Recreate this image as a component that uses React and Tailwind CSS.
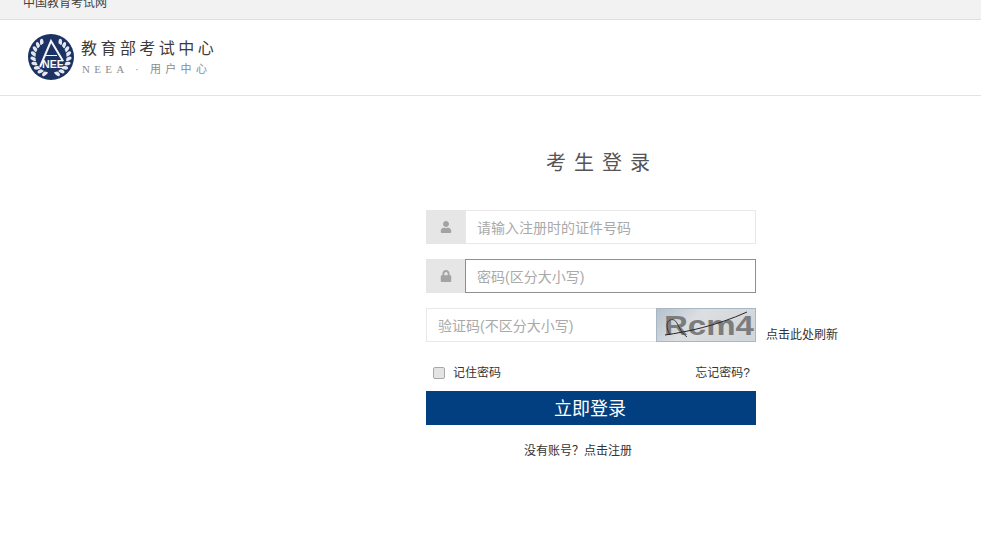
import { FaUser, FaLock } from "react-icons/fa"

const font = "font-['Liberation_Sans','Noto_Sans_CJK_SC',sans-serif]"

function Logo() {
  const leaves = [32, 48, 64, 80, 96, 112, 128, 144, 160]
  return (
    <svg width="46" height="46" viewBox="0 0 46 46" className="shrink-0">
      <circle cx="23" cy="23" r="23" fill="#1c3263" />
      {leaves.map((a) => (
        <g key={a}>
          <ellipse cx="23" cy="5.5" rx="1.8" ry="3.4" fill="#e4e8f0" transform={`rotate(${a} 23 23) rotate(-30 23 5.5)`} />
          <ellipse cx="23" cy="5.5" rx="1.8" ry="3.4" fill="#e4e8f0" transform={`rotate(${-a} 23 23) rotate(30 23 5.5)`} />
        </g>
      ))}
      <circle cx="23" cy="23" r="15.5" fill="#1c3263" />
      <path d="M12 33 L23 7 L35 27" fill="none" stroke="#f5f6fa" strokeWidth="2" />
      <path d="M18 21.5 H29" stroke="#f5f6fa" strokeWidth="1" />
      <text x="25" y="33.5" textAnchor="middle" fontSize="11" fontWeight="700" fill="#f5f6fa" fontFamily="Liberation Sans, sans-serif" textLength="22" lengthAdjust="spacingAndGlyphs">NEE</text>
    </svg>
  )
}

function Captcha() {
  return (
    <svg width="100" height="34" viewBox="0 0 100 34" className="block shrink-0">
      <defs>
        <linearGradient id="captcha-bg" x1="0" y1="0" x2="1" y2="0.3">
          <stop offset="0" stopColor="#b3c0cc" />
          <stop offset="0.45" stopColor="#dcdfe2" />
          <stop offset="1" stopColor="#d2d7db" />
        </linearGradient>
      </defs>
      <rect x="0.5" y="0.5" width="99" height="33" fill="url(#captcha-bg)" stroke="#a9b7c4" />
      <text x="8" y="27" fontSize="27" fontWeight="700" fill="#7c7c7c" textLength="90" lengthAdjust="spacingAndGlyphs" fontFamily="Liberation Sans, sans-serif">Rcm4</text>
      <path d="M9 27 C 30 24, 60 18, 91 4" fill="none" stroke="#262626" strokeWidth="1" />
      <path d="M14 27 C 10 20, 10 14, 14 12 C 19 10, 21 15, 23 19 S 27 26, 31 29" fill="none" stroke="#333" strokeWidth="1" />
    </svg>
  )
}

function IconField({ icon, placeholder, focused }) {
  return (
    <div className="flex h-[34px]">
      <div className="flex w-[39px] items-center justify-center bg-[#e6e6e6] text-[#a3a3a3]">{icon}</div>
      <input
        placeholder={placeholder}
        className={`h-full flex-1 min-w-0 border px-[11px] pt-[1px] text-sm outline-none placeholder:text-[#a9a9a9] ${focused ? "border-[#8f8f8f]" : "border-[#e8e8e8]"}`}
      />
    </div>
  )
}

export default function App() {
  return (
    <div className={`h-[559px] overflow-hidden bg-white text-[#333] ${font}`}>
      <div className="h-5 overflow-hidden border-b border-[#dedede] bg-[#f2f2f2] pl-[23px] text-xs leading-[6px] text-[#444]">
        中国教育考试网
      </div>
      <div className="flex h-[76px] items-center gap-[7px] border-b border-[#e3e3e3] pb-[1px] pl-[28px]">
        <Logo />
        <div className="flex flex-col">
          <span className="text-base leading-[20px] tracking-[3.45px] text-[#3c3c3c]">教育部考试中心</span>
          <span className="mt-[3px] pl-[1px] font-['Liberation_Serif','Noto_Sans_CJK_SC',serif] text-[11px] leading-[14px] tracking-[4.3px] text-[#8c8c8c]">
            NEEA · 用户中心
          </span>
        </div>
      </div>
      <div className="ml-[426px] w-[330px]">
        <h1 className="mt-[53px] ml-[120px] text-xl leading-7 tracking-[8px] whitespace-nowrap text-[#555]">考生登录</h1>
        <div className="mt-[33px] flex flex-col gap-[15px]">
          <IconField icon={<FaUser size={12} />} placeholder="请输入注册时的证件号码" />
          <IconField icon={<FaLock size={12} />} placeholder="密码(区分大小写)" focused />
          <div className="relative flex h-[34px]">
            <input
              placeholder="验证码(不区分大小写)"
              className="h-full min-w-0 flex-1 border border-r-0 border-[#e8e8e8] px-[11px] pt-[1px] text-sm outline-none placeholder:text-[#a9a9a9]"
            />
            <Captcha />
            <a className="absolute top-[19px] left-[340px] text-xs leading-4 whitespace-nowrap text-[#333]">点击此处刷新</a>
          </div>
        </div>
        <div className="mt-[22px] flex h-[17px] items-center justify-between pr-[6px] pl-[7px] text-xs text-[#333]">
          <label className="flex items-center gap-[8px]">
            <input type="checkbox" className="h-[12px] w-[12px] appearance-none rounded-[2px] border border-[#a8a8a8] bg-[#e4e4e4]" />
            <span>记住密码</span>
          </label>
          <a>忘记密码?</a>
        </div>
        <button className="mt-[10px] h-[34px] w-full bg-[#023f80] pt-[2px] pr-[2px] text-lg leading-[32px] text-white">立即登录</button>
        <p className="mt-[18px] pr-[26px] text-center text-xs leading-4 text-[#333]">没有账号？点击注册</p>
      </div>
    </div>
  )
}
